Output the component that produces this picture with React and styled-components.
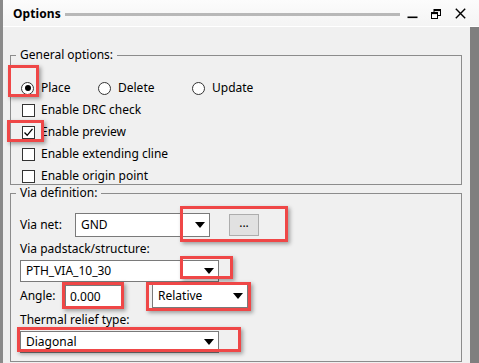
import React from 'react';
import styled, { createGlobalStyle } from 'styled-components';

const GlobalStyle = createGlobalStyle`
  html, body {
    margin: 0;
    padding: 0;
    background: #f0f0f0;
  }
  body {
    font-family: "Noto Sans", "Segoe UI", sans-serif;
    font-size: 12px;
    color: #000;
  }
`;

const Window = styled.div`
  position: relative;
  display: flex;
  width: 479px;
  height: 363px;
  overflow: hidden;
  background: #f0f0f0;
`;

const EdgeStrip = styled.div`
  flex: none;
  width: 3px;
  background: #8a8a8a;
`;

const Main = styled.div`
  flex: 1;
  display: flex;
  flex-direction: column;
  min-width: 0;
`;

const TitleBar = styled.div`
  flex: none;
  display: flex;
  align-items: center;
  height: 27px;
  padding: 1px 7px 0 10px;
  box-sizing: border-box;
  background: linear-gradient(#fcfcfc, #f4f4f4);
  border-bottom: 1px solid #ffffff;
`;

const Title = styled.span`
  font-weight: 700;
  font-size: 12px;
  letter-spacing: 0.1px;
`;

const Grip = styled.div`
  flex: 1;
  height: 3px;
  margin: 1px 0 0 4px;
  background: #b8b8b8;
`;

const IconSlot = styled.div`
  width: 24px;
  display: flex;
  justify-content: center;
  align-items: center;
`;

const Body = styled.div`
  flex: 1;
  display: flex;
  min-height: 0;
`;

const Content = styled.div`
  flex: 1;
  padding: 20px 8px 0 7px;
  min-width: 0;
`;

const Scrollbar = styled.div`
  flex: none;
  width: 9px;
  background: #7f7f7f;
`;

const Group = styled.fieldset`
  margin: 0;
  padding: 0;
  border: 1px solid #8c8c8c;
  min-width: 0;
`;

const Legend = styled.legend`
  margin-left: 5px;
  padding: 0 4px;
  line-height: 16px;
  font-size: 12px;
`;

const GeneralBody = styled.div`
  padding: 14px 0 0 10px;
  margin-bottom: -3px;
`;

const RadioRow = styled.div`
  display: flex;
  height: 22px;
  align-items: center;
`;

const Option = styled.label`
  display: flex;
  align-items: center;
  gap: 7px;
  width: ${p => (p.$w ? `${p.$w}px` : 'auto')};
  line-height: 16px;
`;

const Radio = styled.span`
  width: 13px;
  height: 13px;
  border-radius: 50%;
  border: 1px solid #333;
  background: #fff;
  box-sizing: border-box;
  display: flex;
  align-items: center;
  justify-content: center;
  &::after {
    content: '';
    width: 6px;
    height: 6px;
    border-radius: 50%;
    background: ${p => (p.$on ? '#000' : 'transparent')};
  }
`;

const CheckRow = styled.label`
  display: flex;
  align-items: center;
  gap: 6px;
  height: 22px;
  padding-left: 1px;
  line-height: 16px;
`;

const Box = styled.span`
  width: 13px;
  height: 13px;
  border: 1px solid #333;
  background: #fff;
  box-sizing: border-box;
  display: flex;
  align-items: center;
  justify-content: center;
`;

const ViaBody = styled.div`
  padding: 12px 0 8px 9px;
  display: flex;
  flex-direction: column;
`;

const FieldRow = styled.div`
  display: flex;
  align-items: center;
  margin-top: ${p => p.$mt || 0}px;
`;

const FieldLabel = styled.span`
  display: block;
  width: ${p => (p.$w ? `${p.$w}px` : 'auto')};
  line-height: 16px;
  margin-top: ${p => p.$mt || 0}px;
`;

const Combo = styled.div`
  display: flex;
  align-items: center;
  justify-content: space-between;
  width: ${p => p.$w}px;
  height: ${p => p.$h || 22}px;
  margin-left: ${p => p.$ml || 0}px;
  margin-top: ${p => p.$mt || 0}px;
  padding: 0 4px 0 5px;
  box-sizing: border-box;
  background: #fff;
  border: 1px solid #7a7a7a;
  line-height: 16px;
`;

const Arrow = styled.span`
  width: 0;
  height: 0;
  border-left: 5px solid transparent;
  border-right: 5px solid transparent;
  border-top: 6px solid #000;
`;

const DotsButton = styled.button`
  width: 30px;
  height: 22px;
  margin-left: 19px;
  padding: 0 0 4px;
  border: 1px solid #adadad;
  background: #e1e1e1;
  font-family: inherit;
  font-size: 12px;
  line-height: 12px;
  color: #000;
`;

const TextBox = styled.div`
  width: 58px;
  height: 23px;
  margin-left: 10px;
  padding-left: 4px;
  box-sizing: border-box;
  display: flex;
  align-items: center;
  background: #fff;
  border: 1px solid #7a7a7a;
`;

const Annotation = styled.div`
  position: absolute;
  left: ${p => p.$x}px;
  top: ${p => p.$y}px;
  width: ${p => p.$w}px;
  height: ${p => p.$h}px;
  box-sizing: border-box;
  border: 3px solid #ef4747;
  box-shadow: 2px 2px 4px rgba(0, 0, 0, 0.35);
  pointer-events: none;
`;

const marks = [
  { x: 8, y: 65, w: 31, h: 32 },
  { x: 7, y: 120, w: 37, h: 22 },
  { x: 180, y: 206, w: 108, h: 36 },
  { x: 180, y: 256, w: 53, h: 23 },
  { x: 62, y: 282, w: 62, h: 27 },
  { x: 146, y: 282, w: 105, h: 29 },
  { x: 17, y: 327, w: 224, h: 25 },
];

const checks = [
  { label: 'Enable DRC check', on: false },
  { label: 'Enable preview', on: true },
  { label: 'Enable extending cline', on: false },
  { label: 'Enable origin point', on: false },
];

function CheckMark() {
  return (
    <svg width="11" height="11" viewBox="0 0 11 11">
      <path d="M1.5 5.5 L4.2 8.3 L9.5 1.8" fill="none" stroke="#000" strokeWidth="1.3" />
    </svg>
  );
}

export default function App() {
  return (
    <>
      <GlobalStyle />
      <Window>
        <EdgeStrip />
        <Main>
          <TitleBar>
            <Title>Options</Title>
            <Grip />
            <IconSlot>
              <svg width="11" height="11" viewBox="0 0 11 11">
                <rect x="0.5" y="8.5" width="10" height="1.6" fill="#000" />
              </svg>
            </IconSlot>
            <IconSlot>
              <svg width="10" height="10" viewBox="0 0 10 10">
                <rect x="3" y="0.5" width="6.5" height="6" fill="none" stroke="#000" strokeWidth="1" />
                <rect x="3" y="0.5" width="6.5" height="1.6" fill="#000" />
                <rect x="0.5" y="3.5" width="6" height="6" fill="#fbfbfb" stroke="#000" strokeWidth="1" />
                <rect x="0.5" y="3.5" width="6" height="1.6" fill="#000" />
              </svg>
            </IconSlot>
            <IconSlot>
              <svg width="11" height="11" viewBox="0 0 11 11">
                <path d="M0.8 0.8 L10.2 10.2 M10.2 0.8 L0.8 10.2" stroke="#000" strokeWidth="1.4" />
              </svg>
            </IconSlot>
          </TitleBar>
          <Body>
            <Content>
              <Group>
                <Legend>General options:</Legend>
                <GeneralBody>
                  <RadioRow>
                    <Option $w={77}><Radio $on />Place</Option>
                    <Option $w={94}><Radio />Delete</Option>
                    <Option><Radio />Update</Option>
                  </RadioRow>
                  {checks.map(c => (
                    <CheckRow key={c.label}>
                      <Box>{c.on && <CheckMark />}</Box>
                      {c.label}
                    </CheckRow>
                  ))}
                </GeneralBody>
              </Group>
              <Group>
                <Legend>Via definition:</Legend>
                <ViaBody>
                  <FieldRow>
                    <FieldLabel $w={55}>Via net:</FieldLabel>
                    <Combo $w={135} $h={24}>GND<Arrow /></Combo>
                    <DotsButton>...</DotsButton>
                  </FieldRow>
                  <FieldLabel $mt={4}>Via padstack/structure:</FieldLabel>
                  <Combo $w={199} $mt={3}>PTH_VIA_10_30<Arrow /></Combo>
                  <FieldRow $mt={2}>
                    <FieldLabel $w={35}>Angle:</FieldLabel>
                    <TextBox>0.000</TextBox>
                    <Combo $w={96} $h={24} $ml={29}>Relative<Arrow /></Combo>
                  </FieldRow>
                  <FieldLabel $mt={4}>Thermal relief type:</FieldLabel>
                  <Combo $w={199} $mt={3}>Diagonal<Arrow /></Combo>
                </ViaBody>
              </Group>
            </Content>
            <Scrollbar />
          </Body>
        </Main>
        {marks.map((m, i) => (
          <Annotation key={i} $x={m.x} $y={m.y} $w={m.w} $h={m.h} />
        ))}
      </Window>
    </>
  );
}
